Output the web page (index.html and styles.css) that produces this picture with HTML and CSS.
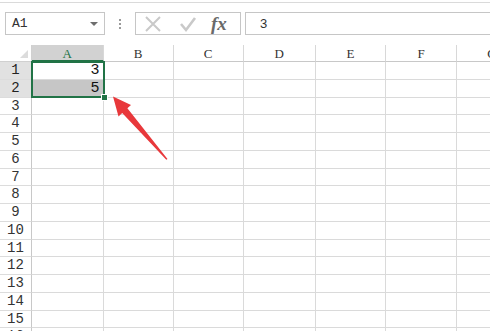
FILE: index.html
```html
<!DOCTYPE html>
<html>
<head>
<meta charset="utf-8">
<link rel="stylesheet" href="styles.css">
</head>
<body>
<div class="edge"></div>
<div class="toolbar">
  <div class="namebox"><span class="ref">A1</span><span class="caret"></span></div>
  <div class="grip"><i></i><i></i><i></i></div>
  <div class="fbtns">
    <svg class="ico" width="18" height="18" viewBox="0 0 18 18"><path d="M2 2 L16 16 M16 2 L2 16" stroke="#c9c9c9" stroke-width="2" fill="none"/></svg>
    <svg class="ico" width="18" height="18" viewBox="0 0 18 18"><path d="M2 9 L7 15 L16 3" stroke="#c9c9c9" stroke-width="2.6" fill="none"/></svg>
    <span class="fx">fx</span>
  </div>
  <div class="finput">3</div>
</div>
<div class="sheet">
  <div class="grid">
    <div class="corner"><span class="tri"></span></div>
    <div class="ch sel">A</div><div class="ch">B</div><div class="ch">C</div><div class="ch">D</div><div class="ch">E</div><div class="ch">F</div><div class="ch">G</div>
    <div class="rh sel">1</div><div class="c num">3</div><div class="c"></div><div class="c"></div><div class="c"></div><div class="c"></div><div class="c"></div><div class="c"></div>
    <div class="rh sel">2</div><div class="c num fill">5</div><div class="c"></div><div class="c"></div><div class="c"></div><div class="c"></div><div class="c"></div><div class="c"></div>
    <div class="rh">3</div><div class="c"></div><div class="c"></div><div class="c"></div><div class="c"></div><div class="c"></div><div class="c"></div><div class="c"></div>
    <div class="rh">4</div><div class="c"></div><div class="c"></div><div class="c"></div><div class="c"></div><div class="c"></div><div class="c"></div><div class="c"></div>
    <div class="rh">5</div><div class="c"></div><div class="c"></div><div class="c"></div><div class="c"></div><div class="c"></div><div class="c"></div><div class="c"></div>
    <div class="rh">6</div><div class="c"></div><div class="c"></div><div class="c"></div><div class="c"></div><div class="c"></div><div class="c"></div><div class="c"></div>
    <div class="rh">7</div><div class="c"></div><div class="c"></div><div class="c"></div><div class="c"></div><div class="c"></div><div class="c"></div><div class="c"></div>
    <div class="rh">8</div><div class="c"></div><div class="c"></div><div class="c"></div><div class="c"></div><div class="c"></div><div class="c"></div><div class="c"></div>
    <div class="rh">9</div><div class="c"></div><div class="c"></div><div class="c"></div><div class="c"></div><div class="c"></div><div class="c"></div><div class="c"></div>
    <div class="rh">10</div><div class="c"></div><div class="c"></div><div class="c"></div><div class="c"></div><div class="c"></div><div class="c"></div><div class="c"></div>
    <div class="rh">11</div><div class="c"></div><div class="c"></div><div class="c"></div><div class="c"></div><div class="c"></div><div class="c"></div><div class="c"></div>
    <div class="rh">12</div><div class="c"></div><div class="c"></div><div class="c"></div><div class="c"></div><div class="c"></div><div class="c"></div><div class="c"></div>
    <div class="rh">13</div><div class="c"></div><div class="c"></div><div class="c"></div><div class="c"></div><div class="c"></div><div class="c"></div><div class="c"></div>
    <div class="rh">14</div><div class="c"></div><div class="c"></div><div class="c"></div><div class="c"></div><div class="c"></div><div class="c"></div><div class="c"></div>
    <div class="rh">15</div><div class="c"></div><div class="c"></div><div class="c"></div><div class="c"></div><div class="c"></div><div class="c"></div><div class="c"></div>
    <div class="rh">16</div><div class="c"></div><div class="c"></div><div class="c"></div><div class="c"></div><div class="c"></div><div class="c"></div><div class="c"></div>
  </div>
  <div class="selection"></div>
  <div class="handle"></div>
  <svg class="arrow" width="490" height="285" viewBox="0 46 490 285">
    <polygon points="113,97.5 131,106 127.4,109.3 167.5,160 166.3,160.8 122.2,113.9 118.5,117.5" fill="#e8383b"/>
  </svg>
</div>
</body>
</html>
```

FILE: styles.css
```css
* { box-sizing: border-box; }
html, body { margin: 0; padding: 0; background: #fff; overflow: hidden; }
body { width: 490px; height: 331px; font-family: "Liberation Mono", monospace; color: #222; }

.edge { height: 3px; border-bottom: 1px solid #dadada; }

.toolbar {
  display: flex;
  align-items: center;
  height: 23px;
  margin-top: 9px;
  padding-left: 5px;
}
.namebox {
  width: 100px;
  height: 23px;
  border: 1px solid #c6c6c6;
  display: flex;
  align-items: center;
  justify-content: space-between;
  padding: 0 6px 0 6px;
  font-size: 13px;
  color: #333;
}
.caret {
  width: 0; height: 0;
  border-left: 4px solid transparent;
  border-right: 4px solid transparent;
  border-top: 4px solid #6e6e6e;
}
.grip {
  width: 30px;
  display: flex;
  flex-direction: column;
  align-items: center;
  gap: 2px;
}
.grip i { display: block; width: 2px; height: 2px; background: #9a9a9a; }
.fbtns {
  width: 106px;
  height: 23px;
  border: 1px solid #c6c6c6;
  display: flex;
  align-items: center;
  padding-left: 8px;
  gap: 17px;
}
.fx {
  font-family: "Liberation Serif", serif;
  font-style: italic;
  font-weight: bold;
  font-size: 19px;
  color: #6a6a6a;
  margin-left: -3px;
  line-height: 1;
}
.finput {
  flex: 1;
  height: 23px;
  margin-left: 4px;
  border: 1px solid #c6c6c6;
  border-right: none;
  font-family: "Liberation Sans", Arial, sans-serif;
  font-size: 13px;
  color: #333;
  padding-left: 14px;
  line-height: 21px;
}

.sheet { position: relative; margin-top: 10px; }
.grid {
  display: grid;
  grid-template-columns: 32px 71.5px 70px 70px 72.5px 70px 71px 71px;
  grid-template-rows: 17px repeat(16, 17.75px);
  width: 530px;
}
.corner { border-right: 1px solid #d0d0d0; border-bottom: 1px solid #d0d0d0; position: relative; background: #fff; }
.tri {
  position: absolute;
  right: 3px; bottom: 3px;
  width: 0; height: 0;
  border-left: 8px solid transparent;
  border-bottom: 8px solid #dcdcdc;
}
.ch {
  font-size: 13px;
  text-align: center;
  line-height: 17px;
  border-right: 1px solid #d8d8d8;
  border-bottom: 1px solid #c8c8c8;
  color: #333;
  font-family: "Liberation Serif", serif;
}
.ch.sel { background: #d2d2d2; color: #217346; border-bottom: 2px solid #217346; }
.rh {
  font-size: 14px;
  text-align: center;
  line-height: 17px;
  border-right: 1px solid #c8c8c8;
  border-bottom: 1px solid #dcdcdc;
  color: #333;
  padding-left: 0;
}
.rh.sel { background: #e1e1e1; color: #222; }
.c { border-right: 1px solid #dadada; border-bottom: 1px solid #dadada; }
.c.num { text-align: right; font-size: 15px; line-height: 18px; padding-right: 3px; color: #111; }
.c.fill { background: #c6c6c6; }

.selection {
  position: absolute;
  left: 31px; top: 16px;
  width: 74px; height: 37px;
  border: 2px solid #217346;
  pointer-events: none;
}
.handle {
  position: absolute;
  left: 101px; top: 49px;
  width: 7px; height: 7px;
  background: #217346;
  border: 1px solid #fff;
}
.arrow { position: absolute; left: 0; top: 0; }
```
